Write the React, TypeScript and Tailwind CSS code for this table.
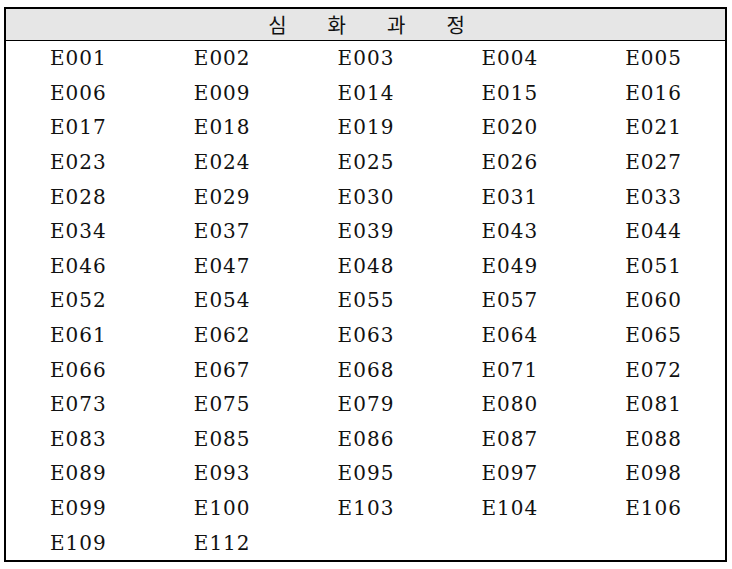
import React from 'react';

const codes = [
  'E001', 'E002', 'E003', 'E004', 'E005',
  'E006', 'E009', 'E014', 'E015', 'E016',
  'E017', 'E018', 'E019', 'E020', 'E021',
  'E023', 'E024', 'E025', 'E026', 'E027',
  'E028', 'E029', 'E030', 'E031', 'E033',
  'E034', 'E037', 'E039', 'E043', 'E044',
  'E046', 'E047', 'E048', 'E049', 'E051',
  'E052', 'E054', 'E055', 'E057', 'E060',
  'E061', 'E062', 'E063', 'E064', 'E065',
  'E066', 'E067', 'E068', 'E071', 'E072',
  'E073', 'E075', 'E079', 'E080', 'E081',
  'E083', 'E085', 'E086', 'E087', 'E088',
  'E089', 'E093', 'E095', 'E097', 'E098',
  'E099', 'E100', 'E103', 'E104', 'E106',
  'E109', 'E112', '', '', '',
];

const title = ['심', '화', '과', '정'];

export default function App() {
  return (
    <div className="w-[732px] h-[569px] bg-white pt-[7px] pl-[4px]">
      <div className="w-[723px] h-[555px] border-2 border-black flex flex-col">
        {/* header */}
        <div className="h-[32px] shrink-0 bg-[#e6e6e6] border-b border-black flex items-center justify-center gap-[41px] pl-[2px] font-['Noto_Sans_CJK_KR',sans-serif] text-[20px] leading-none text-[#111]">
          {title.map((ch) => (
            <span key={ch}>{ch}</span>
          ))}
        </div>

        {/* codes */}
        <div className="flex-1 grid grid-cols-5 grid-rows-[repeat(15,1fr)] font-['DejaVu_Serif',serif] text-[20px] leading-none tracking-[1px] text-[#111]">
          {codes.map((c, i) => (
            <div key={i} className="flex items-center justify-center pl-[1px]">
              {c}
            </div>
          ))}
        </div>
      </div>
    </div>
  );
}
